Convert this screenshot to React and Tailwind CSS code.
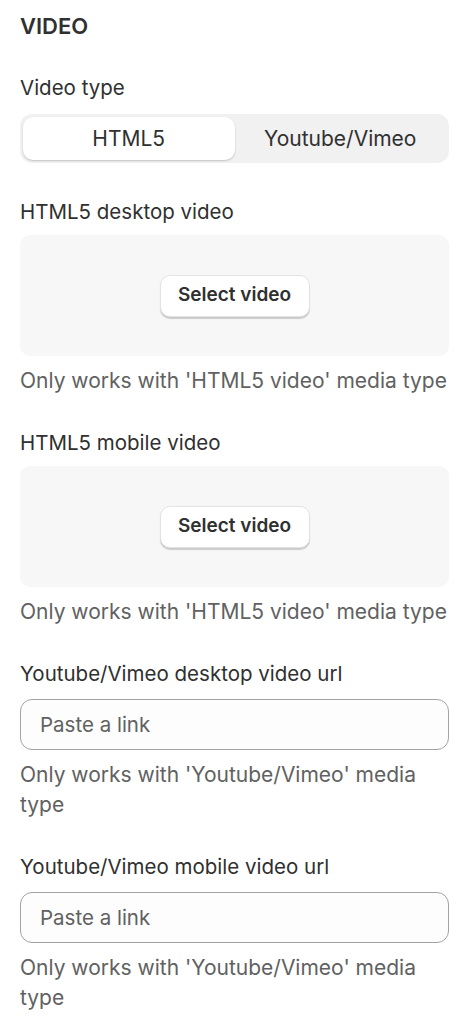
import { useState } from "react";

const Label = ({ children }) => (
  <div className="text-[20.5px] leading-[28px] text-[#303030]">{children}</div>
);

const Help = ({ children }) => (
  <div className="mt-[10px] text-[21px] leading-[30px] text-[#616161]">{children}</div>
);

const VideoPicker = ({ label }) => (
  <div>
    <Label>{label}</Label>
    <div className="mt-[9px] h-[121px] rounded-[10px] bg-[#f7f7f7] flex items-center justify-center">
      <button className="h-[42px] w-[150px] rounded-[10px] bg-white border border-[#e3e3e3] shadow-[0_2px_1px_rgba(0,0,0,0.18)] text-[19px] font-semibold text-[#303030]">
        Select video
      </button>
    </div>
    <Help>Only works with 'HTML5 video' media type</Help>
  </div>
);

const UrlField = ({ label }) => (
  <div>
    <Label>{label}</Label>
    <input
      type="text"
      placeholder="Paste a link"
      className="mt-[11px] w-full h-[51px] rounded-[12px] border border-[#a3a3a3] bg-[#fdfdfd] px-[19px] text-[20.5px] text-[#303030] placeholder:text-[#616161] outline-none"
    />
    <Help>Only works with 'Youtube/Vimeo' media type</Help>
  </div>
);

export default function App() {
  const [type, setType] = useState("html5");

  return (
    <div className="w-[469px] min-h-[1024px] bg-white px-[20px] pt-[12px] font-['Inter',sans-serif]">
      <div className="text-[22px] leading-[28px] font-semibold text-[#303030]">VIDEO</div>

      <div className="mt-[34px]">
        <Label>Video type</Label>
        <div className="mt-[12px] h-[49px] rounded-[12px] bg-[#f1f1f1] p-[3px] flex">
          <button
            onClick={() => setType("html5")}
            className={`flex-1 rounded-[10px] text-[21px] text-[#303030] ${
              type === "html5" ? "bg-white shadow-[0_1px_2px_rgba(0,0,0,0.2)]" : ""
            }`}
          >
            HTML5
          </button>
          <button
            onClick={() => setType("youtube")}
            className={`flex-1 rounded-[10px] text-[21px] text-[#303030] ${
              type === "youtube" ? "bg-white shadow-[0_1px_2px_rgba(0,0,0,0.2)]" : ""
            }`}
          >
            Youtube/Vimeo
          </button>
        </div>
      </div>

      <div className="mt-[35px] flex flex-col gap-[33px]">
        <VideoPicker label="HTML5 desktop video" />
        <VideoPicker label="HTML5 mobile video" />
        <UrlField label="Youtube/Vimeo desktop video url" />
        <UrlField label="Youtube/Vimeo mobile video url" />
      </div>
    </div>
  );
}
